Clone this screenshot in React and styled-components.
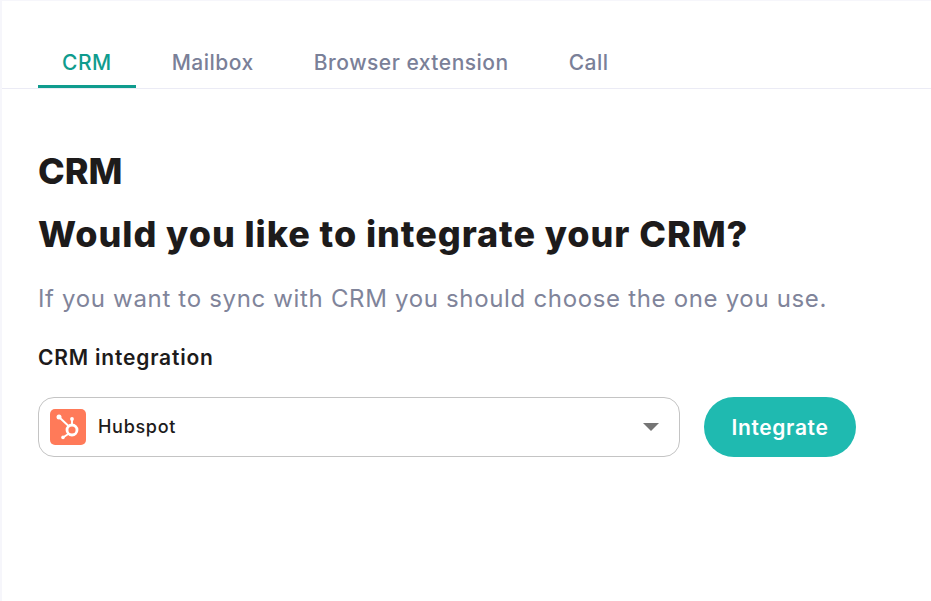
import React from 'react';
import styled, {createGlobalStyle} from 'styled-components';

const GlobalStyle = createGlobalStyle`
  html, body {
    margin: 0;
    padding: 0;
    background: #fff;
  }
  body {
    font-family: "Inter", "Open Sans", sans-serif;
  }
`

const Page = styled.div`
  box-sizing: border-box;
  width: 931px;
  height: 601px;
  overflow: hidden;
  border-top: 1px solid #f6f6fb;
  border-left: 2px solid #f6f6fb;
`

const TabBar = styled.nav`
  display: flex;
  gap: 12px;
  height: 87px;
  box-sizing: content-box;
  align-items: flex-end;
  padding-left: 36px;
  border-bottom: 1px solid #ebebf5;
`

const Tab = styled.a`
  display: block;
  box-sizing: border-box;
  height: 40px;
  padding: 0 24px;
  font-size: 21px;
  letter-spacing: 0.5px;
  line-height: 30px;
  font-weight: 500;
  white-space: nowrap;
  color: ${props => (props.$active ? '#0f9c8e' : '#7a8098')};
  border-bottom: 3px solid ${props => (props.$active ? '#0f9c8e' : 'transparent')};
`

const Content = styled.main`
  padding: 61px 0 0 36px;
`

const PageTitle = styled.h1`
  margin: 0;
  font-size: 36px;
  letter-spacing: 0;
  line-height: 42px;
  font-weight: 800;
  color: #1d1b1b;
`

const Question = styled.h2`
  margin: 21px 0 0;
  font-size: 36px;
  letter-spacing: 0.93px;
  line-height: 42px;
  font-weight: 800;
  white-space: nowrap;
  color: #1d1b1b;
`

const Hint = styled.p`
  margin: 27px 0 0;
  font-size: 24px;
  letter-spacing: 0.67px;
  line-height: 34px;
  font-weight: 400;
  white-space: nowrap;
  color: #80849a;
`

const FieldLabel = styled.label`
  display: block;
  margin-top: 28px;
  font-size: 21px;
  letter-spacing: 0.8px;
  line-height: 28px;
  font-weight: 600;
  color: #1d1b1b;
`

const FieldRow = styled.div`
  display: flex;
  align-items: center;
  gap: 24px;
  margin-top: 25px;
`

const Select = styled.div`
  box-sizing: border-box;
  display: flex;
  align-items: center;
  width: 642px;
  height: 60px;
  padding: 0 20px 0 11px;
  background: #fff;
  border: 1px solid #c4c4c4;
  border-radius: 16px;
`

const Logo = styled.span`
  display: flex;
  align-items: center;
  justify-content: center;
  flex-shrink: 0;
  width: 36px;
  height: 36px;
  border-radius: 5px;
  background: #ff7a59;
`

const SelectText = styled.span`
  flex: 1;
  margin-left: 12px;
  font-size: 18px;
  letter-spacing: 0.7px;
  line-height: 28px;
  font-weight: 500;
  color: #1d1b1b;
`

const Caret = styled.span`
  width: 0;
  height: 0;
  border-left: 8px solid transparent;
  border-right: 8px solid transparent;
  border-top: 8px solid #757575;
`

const IntegrateButton = styled.button`
  width: 152px;
  height: 60px;
  padding: 0;
  border: 0;
  border-radius: 30px;
  background: #1fbab0;
  color: #fff;
  font-family: inherit;
  font-size: 21px;
  letter-spacing: 0.65px;
  font-weight: 600;
`

const HubspotIcon = () => (
  <svg width="26" height="26" viewBox="0 0 26 26" fill="none" aria-hidden="true">
    <circle cx="17" cy="16" r="5" stroke="#fff" strokeWidth="2.8" />
    <path d="M17 10V5M4.5 3.5L13 11.5M13.2 20L8 23.5" stroke="#fff" strokeWidth="1.9" strokeLinecap="round" />
    <circle cx="17" cy="5" r="1.9" fill="#fff" />
    <circle cx="4" cy="3" r="2.5" fill="#fff" />
    <circle cx="8" cy="23.4" r="1.8" fill="#fff" />
  </svg>
)

const tabs = ['CRM', 'Mailbox', 'Browser extension', 'Call'];

const App = () => (
  <Page>
    <GlobalStyle />
    <TabBar>
      {tabs.map((t, i) => (
        <Tab key={t} $active={i === 0}>{t}</Tab>
      ))}
    </TabBar>
    <Content>
      <PageTitle>CRM</PageTitle>
      <Question>Would you like to integrate your CRM?</Question>
      <Hint>If you want to sync with CRM you should choose the one you use.</Hint>
      <FieldLabel>CRM integration</FieldLabel>
      <FieldRow>
        <Select>
          <Logo><HubspotIcon /></Logo>
          <SelectText>Hubspot</SelectText>
          <Caret />
        </Select>
        <IntegrateButton>Integrate</IntegrateButton>
      </FieldRow>
    </Content>
  </Page>
)

export default App;
